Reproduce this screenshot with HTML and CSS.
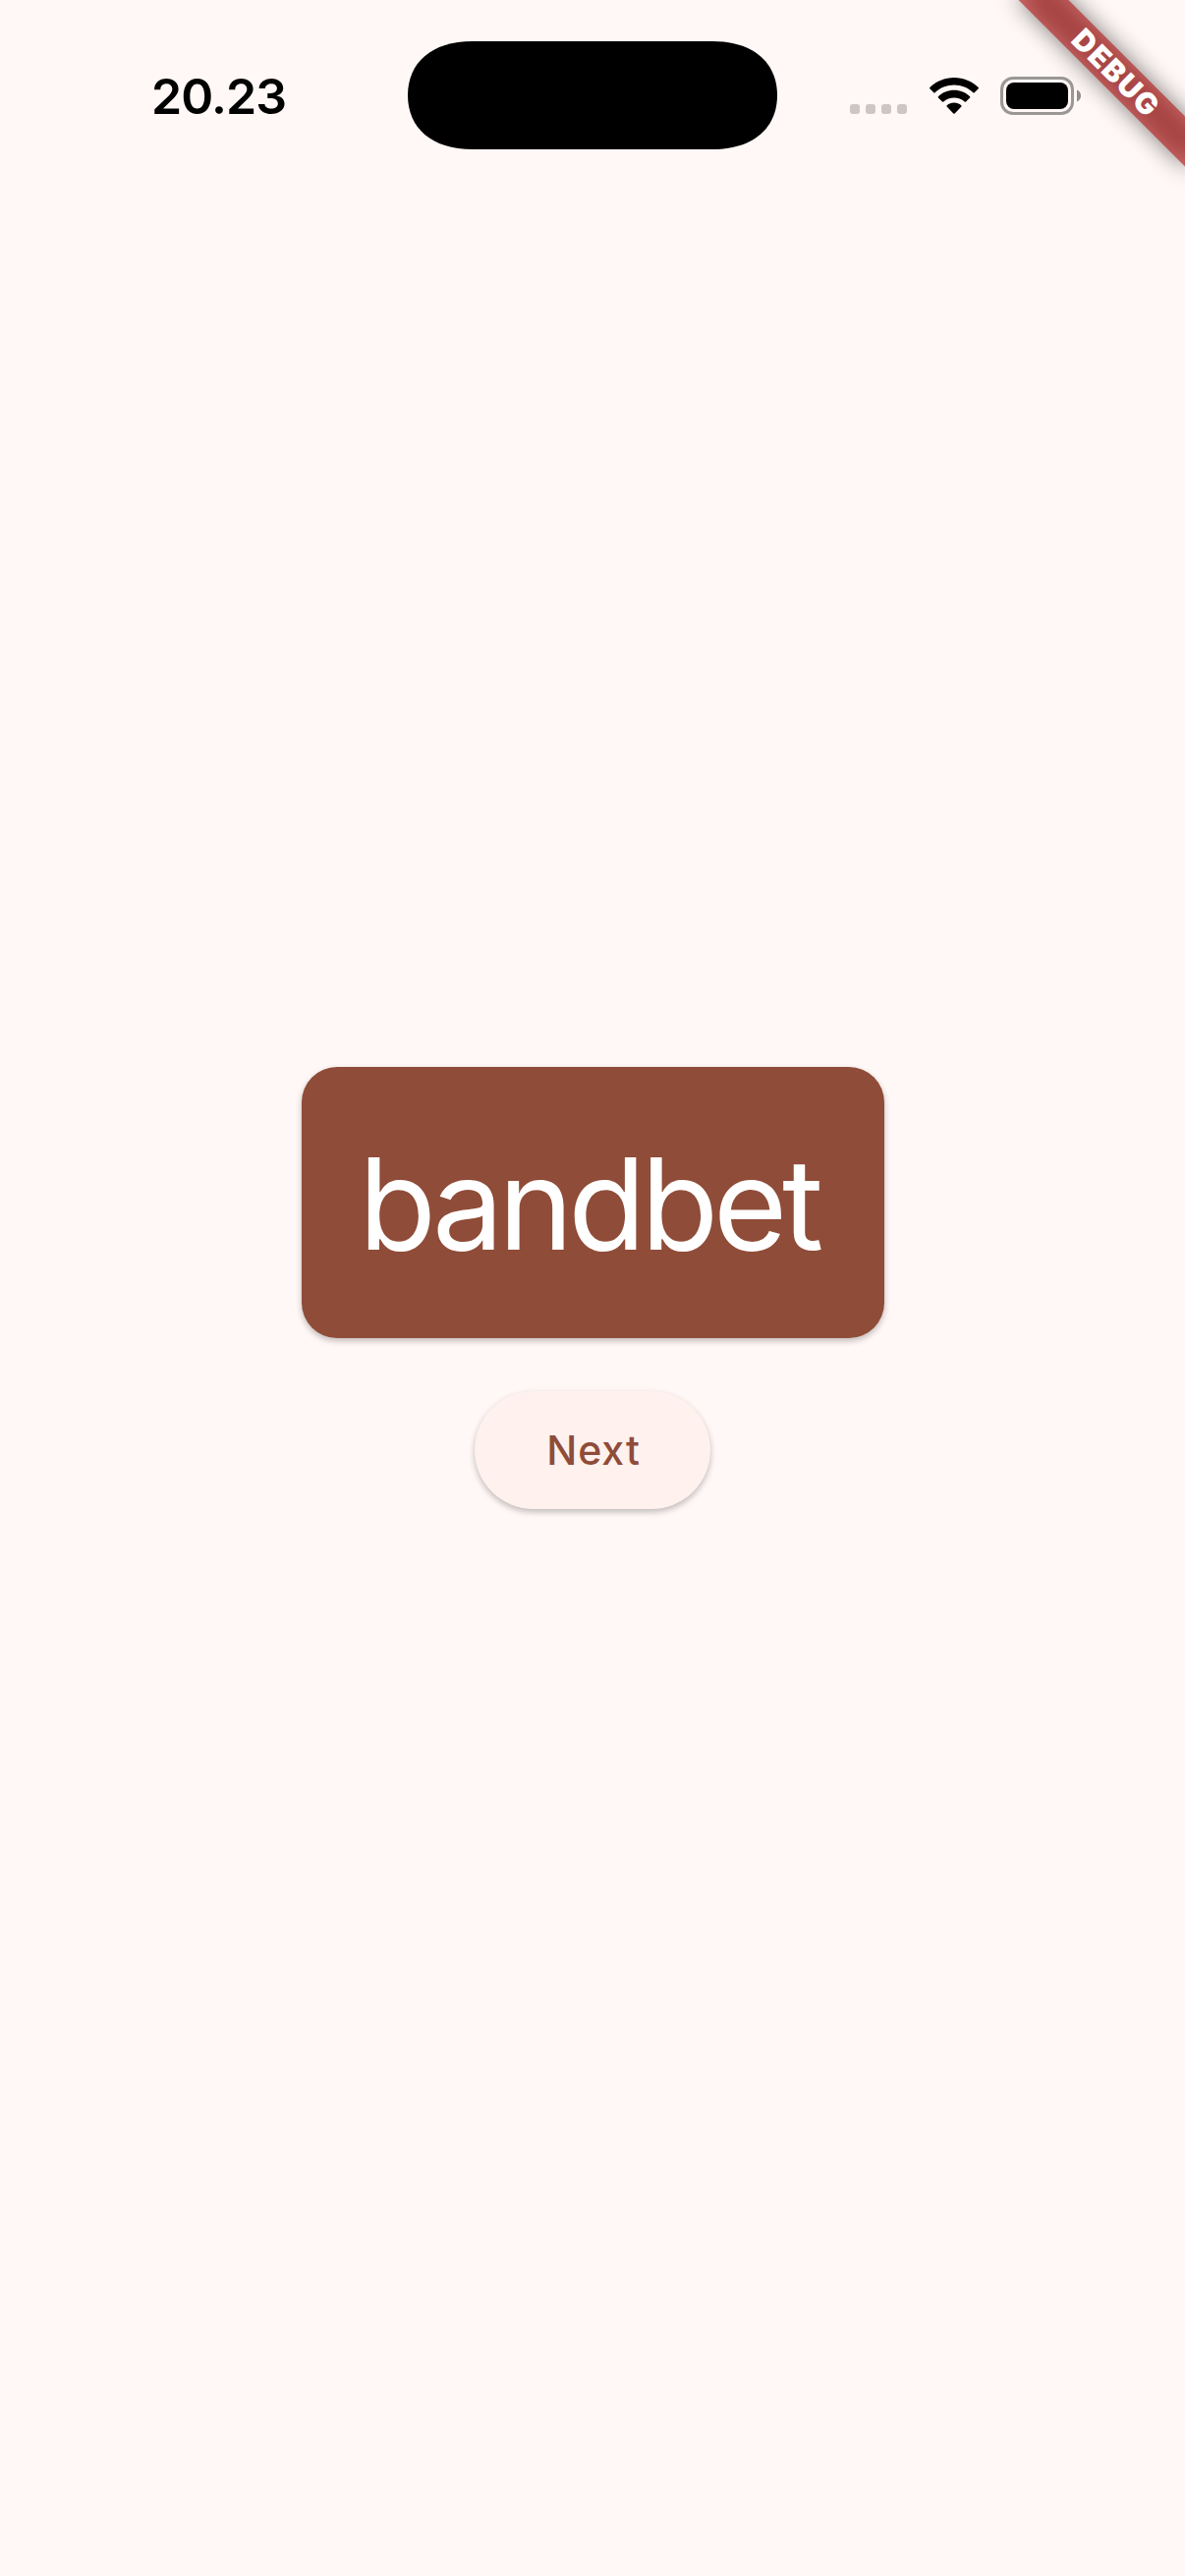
FILE: index.html
```html
<!DOCTYPE html>
<html lang="en">
<head>
<meta charset="utf-8">
<title>Word pair</title>
<link rel="stylesheet" href="styles.css">
</head>
<body>
<div class="screen">
  <header class="status">
    <div class="time">20.23</div>
    <svg class="island" viewBox="0 0 376 110" aria-hidden="true"><path d="M0 55C0 22 24 0 66 0H310C352 0 376 22 376 55S352 110 310 110H66C24 110 0 88 0 55Z"/></svg>
    <div class="indicators">
      <svg class="dots" viewBox="0 0 58 10" aria-hidden="true"><rect width="10" height="10" rx="3"/><rect x="16" width="10" height="10" rx="3"/><rect x="32" width="10" height="10" rx="3"/><rect x="48" width="10" height="10" rx="3"/></svg>
      <svg class="wifi" viewBox="0 0 50 37" aria-hidden="true"><path d="M25 0C34.500 0 43.200 3.700 49.700 10Q50.200 10.700 49.700 11.300L45.700 15.300Q45.100 15.800 44.400 15.200C39.200 10.400 32.500 7.600 25 7.600S10.800 10.400 5.600 15.200Q4.900 15.800 4.300 15.300L.3 11.300Q-.2 10.700 .3 10C6.800 3.700 15.500 0 25 0Z"/><path d="M25 12.800C31.200 12.800 36.900 15.200 41.100 19.200Q41.700 19.900 41.100 20.500L37 24.500Q36.400 25.100 35.700 24.500C32.800 21.900 29.100 20.400 25 20.400S17.200 21.900 14.300 24.500Q13.600 25.100 13 24.500L8.900 20.500Q8.300 19.900 8.900 19.200C13.100 15.200 18.800 12.800 25 12.800Z"/><path d="M25 25.500C27.700 25.500 30.300 26.500 32.300 28.300Q33 29 32.400 29.600L25.700 36.400Q25 37 24.300 36.400L17.600 29.600Q17 29 17.700 28.300C19.700 26.500 22.300 25.500 25 25.500Z"/></svg>
      <svg class="battery" viewBox="0 0 82 39" aria-hidden="true"><rect class="shell" x="1.500" y="1.500" width="72" height="36" rx="11.500"/><rect x="6" y="6" width="63" height="27" rx="8"/><path class="cap" d="M78 13.500C80.600 14.600 82 16.900 82 19.500S80.600 24.400 78 25.500Z"/></svg>
    </div>
  </header>
  <main class="content">
    <div class="card">bandbet</div>
    <button class="next" type="button">Next</button>
  </main>
  <div class="banner"><span>DEBUG</span></div>
</div>
</body>
</html>
```
FILE: styles.css
```css
* { box-sizing: border-box; }

body {
  margin: 0;
  background: #fff8f6;
  font-family: Inter, "Liberation Sans", sans-serif;
}

.screen {
  position: relative;
  display: flex;
  flex-direction: column;
  height: 2622px;
  overflow: hidden;
}

.status {
  display: grid;
  grid-template-columns: 415px 376px 415px;
  height: 177px;
  padding-top: 42px;
  align-items: start;
}

.time {
  padding: 25px 0 0 154px;
  font-size: 50px;
  line-height: 62px;
  font-weight: 600;
  letter-spacing: -.9px;
}

.island {
  width: 376px;
  height: 110px;
}

.indicators {
  display: flex;
  align-items: flex-end;
  height: 75px;
  padding-left: 74px;
}

.dots {
  width: 58px;
  height: 10px;
  margin-bottom: 1px;
  fill: #ccc6c5;
}

.wifi {
  width: 50px;
  height: 37px;
  margin: 0 22.5px 1px;
}

.battery {
  width: 82px;
  height: 39px;
}

.shell {
  fill: none;
  stroke: #9b9796;
  stroke-width: 3;
}

.cap { fill: #918d8c; }

.content {
  flex: 1;
  display: flex;
  flex-direction: column;
  align-items: center;
  justify-content: center;
  gap: 54px;
  padding-bottom: 177px;
}

.card {
  display: flex;
  align-items: center;
  justify-content: center;
  width: 593px;
  height: 276px;
  padding: 1px 8px 0 0;
  border-radius: 36px;
  background: #8f4c38;
  color: #fff;
  font-size: 129px;
  line-height: 156px;
  font-optical-sizing: none;
  letter-spacing: -5.2px;
  box-shadow: 0 3px 6px rgba(0, 0, 0, .25);
}

.next {
  width: 240px;
  height: 120px;
  padding: 0 0 0 2px;
  border: 0;
  border-radius: 60px;
  background: #fff1ed;
  color: #8f4c38;
  font: 450 41px/60px Inter, "Liberation Sans", sans-serif;
  letter-spacing: 1px;
  box-shadow: 0 3px 6px rgba(0, 0, 0, .25);
}

.banner {
  position: absolute;
  left: 1014.250px;
  top: 53.750px;
  width: 240px;
  height: 36px;
  transform: rotate(45deg);
  color: #fff;
  font-size: 30px;
  line-height: 36px;
  font-weight: 900;
  font-optical-sizing: none;
  letter-spacing: 1.5px;
  text-align: center;
}

.banner::before {
  content: "";
  position: absolute;
  inset: 0;
  background: rgba(0, 0, 0, .5);
  filter: blur(12px);
}

.banner span {
  position: relative;
  display: block;
  padding-left: 6px;
  background: rgba(183, 28, 28, .627);
}
```
